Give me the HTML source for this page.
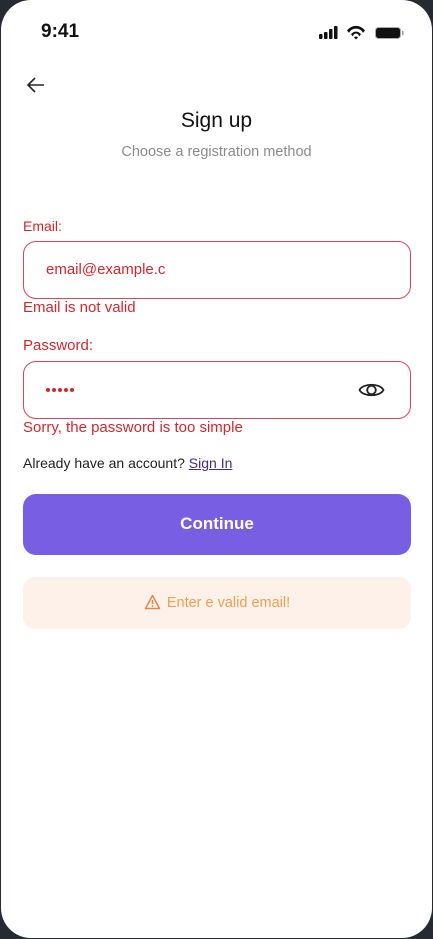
<!DOCTYPE html>
<html><head><meta charset="utf-8"><style>
*{box-sizing:border-box;margin:0;padding:0}
body{width:433px;height:939px;background:#262a33;overflow:hidden;font-family:"Liberation Sans",sans-serif;position:relative}
.f{position:absolute;left:1px;top:0;width:431px;height:938px;background:#fff;border-radius:30px;}
.a{position:absolute}
.lbl{color:#d0282f;font-size:14px}
.inp{position:absolute;left:23px;width:388px;height:58px;border:1px solid #d9455a;border-radius:13px}
</style></head><body><div class="f"></div>
<div class="a" style="left:41px;top:21px;font-size:19px;font-weight:bold;color:#111">9:41</div>
<svg class="a" style="left:318px;top:25px" width="86" height="16" viewBox="0 0 86 16">
<rect x="1" y="9" width="3.5" height="5" rx="1" fill="#111"/><rect x="6" y="7" width="3.5" height="7" rx="1" fill="#111"/><rect x="11" y="4" width="3.5" height="10" rx="1" fill="#111"/><rect x="16" y="1" width="3.5" height="13" rx="1" fill="#111"/>
<path d="M29 5.5 A11 11 0 0 1 47 5.5 L45 7.8 A8 8 0 0 0 31 7.8Z M33 9.3 A6 6 0 0 1 43 9.3 L41 11.5 A3 3 0 0 0 35 11.5Z M36 12.5 L38 14.5 L40 12.5 A2.5 2.5 0 0 0 36 12.5Z" fill="#111"/>
<rect x="57.5" y="2.5" width="25" height="11" rx="3" fill="#111" stroke="#aaa" stroke-width="1"/><rect x="84" y="6" width="1.5" height="4" fill="#999"/>
</svg>
<svg class="a" style="left:26px;top:76px" width="20" height="18" viewBox="0 0 20 18"><path d="M18 9H2M9 2L2 9L9 16" stroke="#222" stroke-width="1.6" fill="none"/></svg>
<div class="a" style="left:0;width:433px;top:109px;text-align:center;font-size:21px;color:#111">Sign up</div>
<div class="a" style="left:0;width:433px;top:144px;text-align:center;font-size:14.5px;color:#8b8b8b">Choose a registration method</div>
<div class="a lbl" style="left:23px;top:218px">Email:</div>
<div class="inp" style="top:241px"></div>
<div class="a lbl" style="left:46px;top:261px;font-size:15px">email@example.c</div>
<div class="a lbl" style="left:23px;top:299px;font-size:15px">Email is not valid</div>
<div class="a lbl" style="left:23px;top:337px;font-size:15px">Password:</div>
<div class="inp" style="top:361px"></div>
<svg class="a" style="left:45px;top:387px" width="32" height="6" viewBox="0 0 32 6"><g fill="#d0282f"><circle cx="3" cy="3" r="2"/><circle cx="9" cy="3" r="2"/><circle cx="15" cy="3" r="2"/><circle cx="21" cy="3" r="2"/><circle cx="27" cy="3" r="2"/></g></svg>
<svg class="a" style="left:358px;top:378px" width="27" height="24" viewBox="0 0 27 24"><path d="M1.5 12C5 5 22 5 25.5 12C22 19 5 19 1.5 12Z" stroke="#222" stroke-width="1.8" fill="none"/><circle cx="13.5" cy="12" r="4.3" stroke="#222" stroke-width="1.8" fill="none"/></svg>
<div class="a lbl" style="left:23px;top:419px;font-size:15px">Sorry, the password is too simple</div>
<div class="a" style="left:23px;top:455px;font-size:14px;color:#222">Already have an account? <span style="color:#4a2a7a;text-decoration:underline">Sign In</span></div>
<div class="a" style="left:23px;top:494px;width:388px;height:61px;background:#775ee2;border-radius:13px;color:#fff;font-weight:bold;font-size:17px;text-align:center;line-height:60px">Continue</div>
<div class="a" style="left:23px;top:577px;width:388px;height:52px;background:#fdf1e9;border-radius:12px;color:#f0a050;font-size:14.5px;text-align:center;line-height:52px"><svg width="17" height="16" viewBox="0 0 17 16" style="vertical-align:-3px;margin-right:6px"><path d="M8.5 1.5L15.5 14.5H1.5Z" stroke="#e08a4a" stroke-width="1.5" fill="none" stroke-linejoin="round"/><path d="M8.5 6V10" stroke="#e08a4a" stroke-width="1.6"/><circle cx="8.5" cy="12" r=".9" fill="#e08a4a"/></svg>Enter e valid email!</div>
</body></html>
